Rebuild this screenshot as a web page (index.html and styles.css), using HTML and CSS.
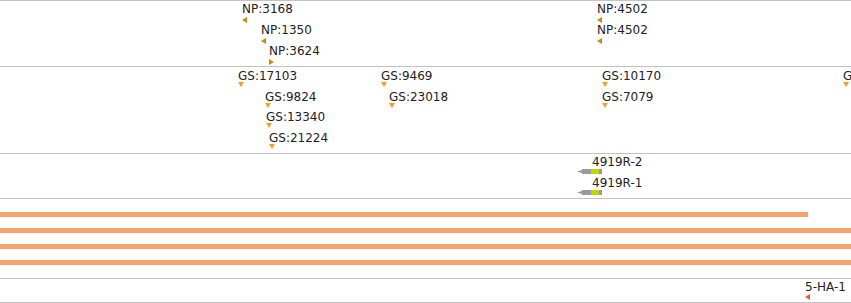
FILE: index.html
```html
<!DOCTYPE html>
<html lang="en">
<head>
  <meta charset="UTF-8" />
  <title>Tracks</title>
  <link rel="stylesheet" href="styles.css">
</head>
<body>
  <div class="tracks">
    <!-- NP track -->
    <div class="track track-np">
      <div class="feat" style="left:242px;top:1px"><span class="label">NP:3168</span><i class="tri left np"></i></div>
      <div class="feat" style="left:261px;top:22px"><span class="label">NP:1350</span><i class="tri left np"></i></div>
      <div class="feat" style="left:269px;top:43px"><span class="label">NP:3624</span><i class="tri right np"></i></div>
      <div class="feat" style="left:597px;top:1px"><span class="label">NP:4502</span><i class="tri left np"></i></div>
      <div class="feat" style="left:597px;top:22px"><span class="label">NP:4502</span><i class="tri left np"></i></div>
    </div>

    <!-- GS track -->
    <div class="track track-gs">
      <div class="feat" style="left:238px;top:2px"><span class="label">GS:17103</span><i class="tri down gs"></i></div>
      <div class="feat" style="left:265px;top:23px"><span class="label">GS:9824</span><i class="tri down gs"></i></div>
      <div class="feat" style="left:266px;top:43px"><span class="label">GS:13340</span><i class="tri down gs"></i></div>
      <div class="feat" style="left:269px;top:64px"><span class="label">GS:21224</span><i class="tri down gs"></i></div>
      <div class="feat" style="left:381px;top:2px"><span class="label">GS:9469</span><i class="tri down gs"></i></div>
      <div class="feat" style="left:389px;top:23px"><span class="label">GS:23018</span><i class="tri down gs"></i></div>
      <div class="feat" style="left:602px;top:2px"><span class="label">GS:10170</span><i class="tri down gs"></i></div>
      <div class="feat" style="left:602px;top:23px"><span class="label">GS:7079</span><i class="tri down gs"></i></div>
      <div class="feat" style="left:843px;top:2px"><span class="label">GS:4411</span><i class="tri down gs"></i></div>
    </div>

    <!-- transcripts -->
    <div class="track track-tx">
      <div class="feat" style="left:577px;top:1px">
        <span class="label indent">4919R-2</span>
        <svg class="gene" width="26" height="5" viewBox="0 0 26 5">
          <polygon points="0,2.5 5,1 5,0 14,0 14,5 5,5 5,4" fill="#9a9a9a"/>
          <rect x="14" y="0" width="8" height="5" fill="#c4d400"/>
          <rect x="22" y="0" width="3" height="5" fill="#9a9a9a"/>
        </svg>
      </div>
      <div class="feat" style="left:577px;top:22px">
        <span class="label indent">4919R-1</span>
        <svg class="gene" width="26" height="5" viewBox="0 0 26 5">
          <polygon points="0,2.5 5,1 5,0 14,0 14,5 5,5 5,4" fill="#9a9a9a"/>
          <rect x="14" y="0" width="8" height="5" fill="#c4d400"/>
          <rect x="22" y="0" width="3" height="5" fill="#9a9a9a"/>
        </svg>
      </div>
    </div>

    <!-- coverage bars -->
    <div class="track track-bars">
      <div class="bar" style="width:808px"></div>
      <div class="bar"></div>
      <div class="bar"></div>
      <div class="bar"></div>
    </div>

    <!-- last track -->
    <div class="track track-last">
      <div class="feat" style="left:805px;top:1px"><span class="label">5-HA-1</span><i class="tri left red"></i></div>
    </div>
  </div>
</body>
</html>
```

FILE: styles.css
```css
html, body { margin: 0; padding: 0; background: #fff; overflow: hidden; }
body { font-family: "DejaVu Sans", Verdana, sans-serif; font-size: 12px; color: #222; }

.tracks { width: 851px; height: 303px; overflow: hidden; display: flex; flex-direction: column; }
.track { position: relative; box-sizing: border-box; border-top: 1px solid #c2c2c2; flex: none; }
.track-np { height: 66px; }
.track-gs { height: 87px; }
.track-tx { height: 45px; }
.track-bars { height: 80px; padding-top: 13px; display: flex; flex-direction: column; gap: 11px; }
.track-last { height: 25px; border-bottom: 1px solid #c2c2c2; }

.feat { position: absolute; display: flex; flex-direction: column; align-items: flex-start; white-space: nowrap; }
.label { display: block; line-height: 14px; height: 14px; }
.label.indent { margin-left: 15px; }

/* triangles take their colour from `color` */
.tri { display: block; width: 0; height: 0; }
.tri.left { margin-top: 1px; border-top: 3px solid transparent; border-bottom: 3px solid transparent; border-right: 5px solid currentColor; }
.tri.right { margin-top: 1px; border-top: 3px solid transparent; border-bottom: 3px solid transparent; border-left: 5px solid currentColor; }
.tri.down { margin-top: -1px; border-left: 3px solid transparent; border-right: 3px solid transparent; border-top: 5px solid currentColor; }
.tri.np { color: #c98a0c; }
.tri.gs { color: #f2a126; }
.tri.red { color: #f0533f; margin-top: 0; }

.gene { display: block; }

.bar { height: 5px; width: 100%; background: #f5a46f; flex: none; }
```
